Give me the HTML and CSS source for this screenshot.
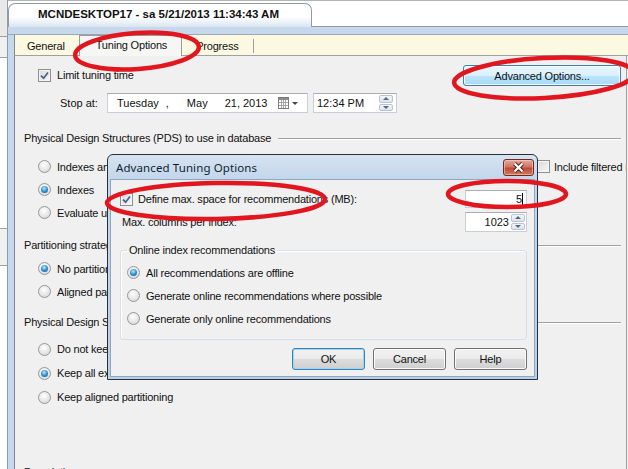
FILE: index.html
```html
<!DOCTYPE html>
<html lang="en">
  <head>
    <meta charset="UTF-8" />
    <title>Database Engine Tuning Advisor - Tuning Options</title>
    <link rel="stylesheet" href="styles.css">
  </head>
  <body>
    <div class="screen">
      <div class="side-pane">
        <div class="side-block side-top"></div>
        <div class="side-block side-mid"></div>
        <div class="side-block side-low"></div>
      </div>

      <div class="window">
        <div class="doc-tabs">
          <div class="doc-tab">MCNDESKTOP17 - sa 5/21/2013 11:34:43 AM</div>
        </div>
        <div class="doc-band"></div>

        <div class="frame">
          <div class="tab-strip">
            <div class="tab">General</div>
            <div class="tab active">Tuning Options</div>
            <div class="tab last">Progress</div>
          </div>

          <div class="content">
            <div class="row row-top">
              <span class="check">
                <svg class="tick" viewBox="0 0 9 9"><path d="M1 4.6 L3.6 7.2 L8 1.4" /></svg>
              </span>
              <span class="label">Limit tuning time</span>
              <button class="btn btn-hot">Advanced Options...</button>
            </div>

            <div class="row row-stop">
              <span class="stop-label">Stop at:</span>
              <div class="date-picker">
                <span class="dp-day">Tuesday</span>
                <span class="dp-comma">,</span>
                <span class="dp-month">May</span>
                <span class="dp-rest">21, 2013</span>
                <svg class="dp-cal" width="11" height="12" viewBox="0 0 11 12">
                  <rect x="0.5" y="0.5" width="10" height="11" fill="#fff" stroke="#7c7c7c" />
                  <rect x="1" y="1" width="9" height="2" fill="#8c8c8c" />
                  <path d="M1 5.5h9M1 8.5h9M3.5 3v8M5.5 3v8M7.5 3v8" stroke="#a6a6a6" />
                </svg>
                <span class="dp-arrow"></span>
              </div>
              <div class="time-picker">
                <span class="tp-value">12:34 PM</span>
                <span class="spin">
                  <span class="spin-up"></span>
                  <span class="spin-down"></span>
                </span>
              </div>
            </div>

            <div class="group-head head-pds">Physical Design Structures (PDS) to use in database</div>
            <div class="options">
              <div class="option split">
                <div class="option-main"><span class="radio"></span><span class="label">Indexes and indexed views</span></div>
                <div class="option-main">
                  <span class="check"></span><span class="label">Include filtered indexes</span>
                </div>
              </div>
              <div class="option"><span class="radio on"></span><span class="label">Indexes</span></div>
              <div class="option"><span class="radio"></span><span class="label">Evaluate utilization of existing PDS only</span></div>
            </div>

            <div class="group-head head-part">Partitioning strategy to employ</div>
            <div class="options options-part">
              <div class="option"><span class="radio on"></span><span class="label">No partitioning</span></div>
              <div class="option"><span class="radio"></span><span class="label">Aligned partitioning</span></div>
            </div>

            <div class="group-head head-keep">Physical Design Structures (PDS) to keep in database</div>
            <div class="options options-keep">
              <div class="option"><span class="radio"></span><span class="label">Do not keep any existing PDS</span></div>
              <div class="option"><span class="radio on"></span><span class="label">Keep all existing PDS</span></div>
              <div class="option"><span class="radio"></span><span class="label">Keep aligned partitioning</span></div>
            </div>

            <div class="group-head head-desc">Description</div>
          </div>
        </div>
      </div>

      <div class="dialog">
        <div class="dlg-title">
          <span class="dlg-caption">Advanced Tuning Options</span>
          <button class="dlg-close">
            <svg width="13" height="11" viewBox="0 0 13 11">
              <path d="M2.5 1.5 L10.5 9.5 M10.5 1.5 L2.5 9.5" stroke="#4b231c" stroke-width="4" />
              <path d="M2.5 1.5 L10.5 9.5 M10.5 1.5 L2.5 9.5" stroke="#fff" stroke-width="2.2" />
            </svg>
          </button>
        </div>
        <div class="dlg-body">
          <div class="dlg-row">
            <span class="check">
              <svg class="tick" viewBox="0 0 9 9"><path d="M1 4.6 L3.6 7.2 L8 1.4" /></svg>
            </span>
            <span class="label">Define max. space for recommendations (MB):</span>
            <span class="field">5<span class="caret"></span></span>
          </div>
          <div class="dlg-row dlg-row-cols">
            <span class="label">Max. columns per index:</span>
            <span class="field field-spin">
              <span class="spin-value">1023</span>
              <span class="spin">
                <span class="spin-up"></span>
                <span class="spin-down"></span>
              </span>
            </span>
          </div>

          <fieldset class="dlg-group">
            <legend>Online index recommendations</legend>
            <div class="option"><span class="radio on"></span><span class="label">All recommendations are offline</span></div>
            <div class="option"><span class="radio"></span><span class="label">Generate online recommendations where possible</span></div>
            <div class="option"><span class="radio"></span><span class="label">Generate only online recommendations</span></div>
          </fieldset>

          <div class="dlg-buttons">
            <button class="btn btn-default">OK</button>
            <button class="btn">Cancel</button>
            <button class="btn">Help</button>
          </div>
        </div>
      </div>

      <!-- red marker rings drawn over the screenshot -->
      <svg class="marks" width="628" height="469" viewBox="0 0 628 469">
        <g fill="none" stroke="#e1161e" stroke-width="4.5">
          <ellipse cx="137" cy="51" rx="62" ry="18" transform="rotate(-4 137 51)" />
          <ellipse cx="544" cy="78" rx="90" ry="20" transform="rotate(-3 544 78)" />
          <ellipse cx="216" cy="201" rx="109" ry="18" transform="rotate(-1 216 201)" />
          <ellipse cx="507" cy="194" rx="59" ry="13" />
        </g>
      </svg>
    </div>
  </body>
</html>
```

FILE: styles.css
```css
body {
  margin: 0;
  font-family: "Liberation Sans", Arial, sans-serif;
  font-size: 11px;
  color: #111;
}
.screen {
  position: relative;
  width: 628px;
  height: 469px;
  overflow: hidden;
  display: flex;
  background-color: #f0f0f0;
}
.label {
  white-space: nowrap;
  letter-spacing: -0.2px;
}

/* left neighbour pane */
.side-pane {
  width: 8px;
  flex: none;
  display: flex;
  flex-direction: column;
  background-color: #f0f0f0;
}
.side-block {
  flex: none;
  border-right: 1px solid #9a9a9a;
  background-color: #fff;
}
.side-top {
  height: 36px;
  background-color: #e9e9e9;
  border-bottom: 1px solid #a0a0a0;
}
.side-mid {
  margin-top: 20px;
  height: 170px;
  border-top: 1px solid #a0a0a0;
  border-bottom: 1px solid #a0a0a0;
}
.side-low {
  margin-top: 36px;
  flex: 1;
  border-top: 1px solid #a0a0a0;
}

/* document window */
.window {
  flex: 1;
  display: flex;
  flex-direction: column;
  min-width: 0;
  min-height: 0;
}
.doc-tabs {
  flex: none;
  height: 25px;
  display: flex;
  align-items: flex-end;
  background-color: #fff;
  border-top: 1px solid #b4b4b4;
  border-bottom: 1px solid #8e9aa8;
}
.doc-tab {
  width: 304px;
  height: 24px;
  margin-bottom: -1px;
  box-sizing: border-box;
  padding: 4px 0 0 29px;
  border: 1px solid #8e9aa8;
  border-bottom: none;
  border-radius: 7px 7px 0 0;
  background: linear-gradient(#ffffff, #ffffff 55%, #d9e5f2);
  font-weight: bold;
  font-size: 11.5px;
  white-space: nowrap;
}
.doc-band {
  flex: none;
  height: 7px;
  background-color: #c7d8ec;
  border-bottom: 1px solid #9aa6b4;
}
.frame {
  flex: 1;
  min-height: 0;
  display: flex;
  flex-direction: column;
  border-left: 6px solid #c7d8ec;
  box-shadow: -1px 0 #8e9aa8;
}
.tab-strip {
  flex: none;
  height: 20px;
  display: flex;
  align-items: flex-end;
  padding-left: 2px;
  background-color: #fbf9e1;
  border-left: 1px solid #828790;
  border-bottom: 1px solid #a0a0a0;
}
.tab {
  height: 20px;
  line-height: 22px;
  padding: 0 14px 0 10px;
  white-space: nowrap;
  letter-spacing: -0.2px;
}
.tab.active {
  height: 21px;
  margin-bottom: -1px;
  padding: 0 14px 0 16px;
  box-sizing: border-box;
  border: 1px solid #9a9a9a;
  border-bottom: none;
  background-color: #f6f6f4;
  line-height: 18px;
}
.tab.last {
  padding: 0 14px 0 14px;
  border-right: 1px solid #a0a0a0;
  height: 14px;
  line-height: 14px;
  margin-bottom: 2px;
}

/* tuning options page */
.content {
  flex: 1;
  min-height: 0;
  overflow: hidden;
  padding-top: 9px;
  border-left: 1px solid #828790;
  border-right: 1px solid #a0a0a0;
  margin-right: 1px;
  min-width: 0;
}
.row {
  display: flex;
  align-items: center;
}
.row-top {
  height: 20px;
  padding-left: 23px;
  gap: 6px;
}
.row-stop {
  height: 20px;
  margin-top: 8px;
  padding-left: 45px;
}
.stop-label {
  width: 47px;
}
.date-picker {
  width: 201px;
  height: 20px;
  box-sizing: border-box;
  display: flex;
  align-items: center;
  padding-left: 9px;
  background-color: #fff;
  border: 1px solid #c9ced6;
  border-top-color: #abadb3;
}
.dp-comma {
  margin-left: 7px;
}
.dp-month {
  margin-left: 18px;
}
.dp-rest {
  margin-left: 17px;
}
.dp-cal {
  margin-left: 11px;
}
.dp-arrow {
  margin-left: 3px;
  border-left: 3px solid transparent;
  border-right: 3px solid transparent;
  border-top: 3px solid #444;
}
.time-picker {
  width: 84px;
  height: 20px;
  margin-left: 5px;
  box-sizing: border-box;
  display: flex;
  align-items: center;
  justify-content: space-between;
  padding: 0 3px 0 3px;
  background-color: #fff;
  border: 1px solid #c9ced6;
  border-top-color: #abadb3;
}
.spin {
  width: 14px;
  height: 16px;
  display: flex;
  flex-direction: column;
  gap: 1px;
}
.spin-up,
.spin-down {
  flex: 1;
  display: flex;
  align-items: center;
  justify-content: center;
  border: 1px solid #b9c4d0;
  border-radius: 2px;
  background: linear-gradient(#f4f6f9, #dde3ea);
}
.spin-up::before,
.spin-down::before {
  content: "";
  border-left: 3px solid transparent;
  border-right: 3px solid transparent;
}
.spin-up::before {
  border-bottom: 3px solid #4d6a8a;
}
.spin-down::before {
  border-top: 3px solid #4d6a8a;
}

.btn {
  height: 21px;
  padding: 0;
  font-family: inherit;
  font-size: 11px;
  color: #111;
  border: 1px solid #707070;
  border-radius: 3px;
  background: linear-gradient(#f2f2f2, #ebebeb 50%, #dddddd 50%, #cfcfcf);
  box-shadow: inset 0 0 0 1px #fbfbfb;
  letter-spacing: -0.2px;
}
.btn-hot {
  width: 158px;
  margin-left: auto;
  margin-right: 5px;
  margin-top: 1px;
  border-color: #3c7fb1;
  background: linear-gradient(#eaf6fd, #d9f0fc 50%, #bee6fd 50%, #a7d9f5);
}

.group-head {
  flex: none;
  height: 18px;
  display: flex;
  align-items: center;
  padding-left: 9px;
  white-space: nowrap;
  letter-spacing: -0.2px;
}
.group-head::after {
  content: "";
  flex: 1;
  margin: 1px 5px 0 7px;
  border-top: 1px solid #a0a0a0;
  border-bottom: 1px solid #fff;
}
.head-pds {
  margin-top: 16px;
}
.head-part {
  margin-top: 12px;
}
.head-keep {
  margin-top: 10px;
}
.head-desc {
  margin-top: 54px;
}
.head-desc::after {
  display: none;
}
.options {
  margin-top: 8px;
  padding-left: 23px;
}
.options-part {
  margin-top: 3px;
}
.options-keep {
  margin-top: 6px;
}
.options-keep .option {
  height: 24px;
}
.option,
.option-main {
  height: 23px;
  display: flex;
  align-items: center;
  gap: 6px;
}
.option.split {
  display: grid;
  grid-template-columns: 499px auto;
  gap: 0;
}
.option.split .option-main + .option-main {
  gap: 4px;
}

.check {
  width: 13px;
  height: 13px;
  flex: none;
  box-sizing: border-box;
  display: inline-flex;
  align-items: center;
  justify-content: center;
  border: 1px solid #8e8f8f;
  background: linear-gradient(135deg, #d9d9d9, #f8f8f8);
  box-shadow: inset 0 0 0 1px #f4f4f4;
}
.tick {
  width: 9px;
  height: 9px;
  fill: none;
  stroke: #4a5f8e;
  stroke-width: 1.7;
}
.radio {
  position: relative;
  width: 13px;
  height: 13px;
  flex: none;
  box-sizing: border-box;
  border-radius: 50%;
  border: 1px solid #979797;
  background: radial-gradient(circle at 45% 35%, #ffffff, #e6e6e6 55%, #cfcfcf);
}
.radio.on::after {
  content: "";
  position: absolute;
  inset: 2px;
  border-radius: 50%;
  background: radial-gradient(circle at 45% 35%, #bfe9ff 0, #3b9ad8 45%, #0f4f8c 95%);
}

/* advanced tuning options dialog */
.dialog {
  position: absolute;
  left: 107px;
  top: 154px;
  width: 431px;
  height: 226px;
  box-sizing: border-box;
  display: flex;
  flex-direction: column;
  padding: 0 2px 2px;
  border: 1px solid #24323f;
  border-radius: 6px 6px 0 0;
  background: linear-gradient(#d6e3f1, #c3d6ec 24px, #b9cfe7);
}
.dlg-title {
  height: 23px;
  display: flex;
  align-items: center;
  padding: 1px 1px 0 6px;
}
.dlg-caption {
  font-family: "Noto Sans", "Open Sans", sans-serif;
  font-size: 11.5px;
  color: #0f1f30;
  letter-spacing: 0.1px;
}
.dlg-close {
  width: 31px;
  height: 17px;
  margin-left: auto;
  padding: 0;
  display: flex;
  align-items: center;
  justify-content: center;
  border: 1px solid #6b2a20;
  border-radius: 3px;
  background: linear-gradient(#e5a89b, #d27563 45%, #c14a34 55%, #cf7a5e);
  box-shadow: inset 0 0 0 1px rgba(255, 220, 210, 0.5);
}
.dlg-body {
  flex: 1;
  padding: 9px 7px 0 9px;
  background-color: #f0f0f0;
  border: 1px solid #8fa6bf;
}
.dlg-row {
  height: 20px;
  display: flex;
  align-items: center;
  gap: 5px;
}
.dlg-row-cols {
  margin-top: 3px;
  padding-left: 2px;
}
.field {
  width: 62px;
  height: 18px;
  margin-left: auto;
  box-sizing: border-box;
  display: flex;
  align-items: center;
  justify-content: flex-end;
  padding-right: 3px;
  background-color: #fff;
  border: 1px solid #c9ced6;
  border-top-color: #abadb3;
}
.caret {
  width: 1px;
  height: 13px;
  background-color: #000;
}
.field-spin {
  height: 20px;
  padding-right: 1px;
  gap: 2px;
}
.dlg-group {
  height: 96px;
  margin: 12px 0 0 0;
  padding: 5px 0 0 6px;
  box-sizing: border-box;
  border: 1px solid #d5dfe5;
  border-radius: 3px;
  box-shadow: inset 1px 1px #fff;
}
.dlg-group legend {
  padding: 0 2px;
  margin-left: 0;
  letter-spacing: -0.2px;
}
.dlg-buttons {
  display: flex;
  justify-content: flex-end;
  gap: 8px;
  margin-top: 8px;
}
.dlg-buttons .btn {
  width: 73px;
  height: 22px;
}
.btn-default {
  border-color: #3c7fb1;
  box-shadow: inset 0 0 0 1px #9ad6f6;
}

/* screenshot annotations */
.marks {
  position: absolute;
  left: 0;
  top: 0;
  pointer-events: none;
}
```
